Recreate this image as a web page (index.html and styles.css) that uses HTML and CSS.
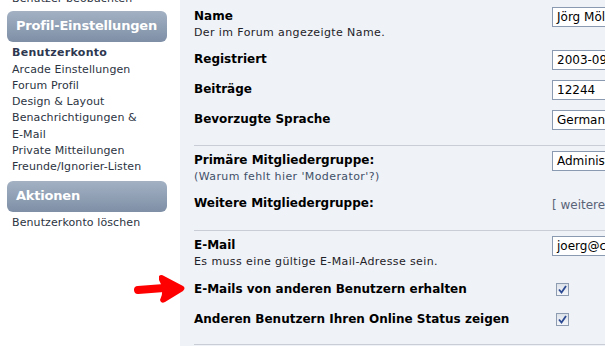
FILE: index.html
```html
<!DOCTYPE html>
<html lang="de">
  <head>
    <meta charset="UTF-8" />
    <title>Profil-Einstellungen</title>
    <link rel="stylesheet" href="styles.css">
  </head>
  <body>
    <div class="page">
      <div class="sidebar">
        <a class="nav-link nav-cut">Benutzer beobachten</a>
        <div class="box-title">Profil-Einstellungen</div>
        <ul class="nav">
          <li class="nav-link active">Benutzerkonto</li>
          <li class="nav-link">Arcade Einstellungen</li>
          <li class="nav-link">Forum Profil</li>
          <li class="nav-link">Design &amp; Layout</li>
          <li class="nav-link">Benachrichtigungen &amp;<br>E-Mail</li>
          <li class="nav-link">Private Mitteilungen</li>
          <li class="nav-link">Freunde/Ignorier-Listen</li>
        </ul>
        <div class="box-title">Aktionen</div>
        <ul class="nav">
          <li class="nav-link">Benutzerkonto löschen</li>
        </ul>
      </div>

      <div class="content">
        <div class="section">
          <div class="row">
            <div class="label">
              <div class="title">Name</div>
              <div class="desc">Der im Forum angezeigte Name.</div>
            </div>
            <div class="value"><span class="input">Jörg Möllenkamp</span></div>
          </div>
          <div class="row">
            <div class="label"><div class="title">Registriert</div></div>
            <div class="value"><span class="input">2003-09-12</span></div>
          </div>
          <div class="row">
            <div class="label"><div class="title">Beiträge</div></div>
            <div class="value"><span class="input">12244</span></div>
          </div>
          <div class="row">
            <div class="label"><div class="title">Bevorzugte Sprache</div></div>
            <div class="value"><span class="input">German</span></div>
          </div>
        </div>

        <div class="section">
          <div class="row">
            <div class="label">
              <div class="title">Primäre Mitgliedergruppe:</div>
              <div class="desc hint">(Warum fehlt hier 'Moderator'?)</div>
            </div>
            <div class="value"><span class="input">Administrator</span></div>
          </div>
          <div class="row short">
            <div class="label"><div class="title">Weitere Mitgliedergruppe:</div></div>
            <div class="value"><span class="more">[ weitere anzeigen ]</span></div>
          </div>
        </div>

        <div class="section">
          <div class="row">
            <div class="label">
              <div class="title">E-Mail</div>
              <div class="desc">Es muss eine gültige E-Mail-Adresse sein.</div>
            </div>
            <div class="value"><span class="input">joerg@c0t0d0s0.org</span></div>
          </div>
          <div class="row check-row">
            <div class="label"><div class="title">E-Mails von anderen Benutzern erhalten</div></div>
            <div class="value"><span class="checkbox"><svg width="9" height="9" viewBox="0 0 9 9"><path d="M1 4.5 L3.5 7.5 L8 1" fill="none" stroke="#2b4a93" stroke-width="1.8"/></svg></span></div>
          </div>
          <div class="row check-row">
            <div class="label"><div class="title">Anderen Benutzern Ihren Online Status zeigen</div></div>
            <div class="value"><span class="checkbox"><svg width="9" height="9" viewBox="0 0 9 9"><path d="M1 4.5 L3.5 7.5 L8 1" fill="none" stroke="#2b4a93" stroke-width="1.8"/></svg></span></div>
          </div>
        </div>
      </div>

      <svg class="arrow" width="54" height="32" viewBox="0 0 54 32">
        <path d="M4 17 L30 15" stroke="#f00" stroke-width="8" stroke-linecap="round"/>
        <path d="M25 3 Q27 1 30 3 L49 13 Q52 15 49 18 L31 29 Q27 31 26 27 Q31 17 25 7 Z" fill="#f00"/>
      </svg>
    </div>
  </body>
</html>
```

FILE: styles.css
```css
body {
  margin: 0;
  background-color: #fff;
  font-family: 'DejaVu Sans', Verdana, sans-serif;
  color: #000;
  overflow: hidden;
}
.page {
  position: relative;
  display: flex;
  height: 346px;
}
.sidebar {
  width: 160px;
  flex: none;
  padding: 0 13px 0 7px;
}
.nav-cut {
  display: block;
  margin-top: -9px;
  margin-bottom: 4px;
}
.nav-link {
  padding-left: 5px;
  font-size: 11px;
  letter-spacing: 0.1px;
  line-height: 16.3px;
  color: #2c3442;
  white-space: nowrap;
}
.nav-link.active {
  font-weight: bold;
  letter-spacing: 0.3px;
  color: #2e3850;
}
.nav {
  list-style: none;
  margin: 3px 0 5px;
  padding: 0;
}
.box-title {
  height: 31px;
  line-height: 30px;
  padding-left: 9px;
  border-radius: 6px;
  background: linear-gradient(#a3b1c3, #7e8fa6);
  color: #fff;
  font-size: 13px;
  letter-spacing: -0.2px;
  font-weight: bold;
}

.content {
  flex: 1;
  background-color: #eff2f7;
  padding: 2px 0 0 14px;
  overflow: hidden;
}
.section {
  padding-bottom: 10px;
  border-bottom: 1px solid #c9ced6;
}
.row {
  display: grid;
  grid-template-columns: 358px 1fr;
  padding: 5px 0;
  min-height: 20px;
}
.row.short {
  min-height: 19px;
}
.check-row {
  align-items: center;
}
.title {
  font-size: 12px;
  font-weight: bold;
  line-height: 19px;
  white-space: nowrap;
}
.desc {
  font-size: 11px;
  letter-spacing: 0.4px;
  line-height: 14px;
  color: #1e2228;
  white-space: nowrap;
}
.desc.hint {
  color: #3f5068;
}
.input {
  display: block;
  box-sizing: border-box;
  width: 200px;
  height: 20px;
  padding: 0 4px;
  border: 1px solid #8a9ab0;
  background-color: #fff;
  font-size: 12px;
  line-height: 18px;
  white-space: nowrap;
}
.more {
  font-size: 12px;
  line-height: 19px;
  color: #5a6478;
  white-space: nowrap;
}
.checkbox {
  display: flex;
  align-items: center;
  justify-content: center;
  box-sizing: border-box;
  width: 13px;
  height: 13px;
  margin-left: 4px;
  border: 1px solid #8e9cb2;
  background: linear-gradient(#dde2ea, #f4f6f9);
}
.arrow {
  position: absolute;
  left: 134px;
  top: 273px;
}
```
